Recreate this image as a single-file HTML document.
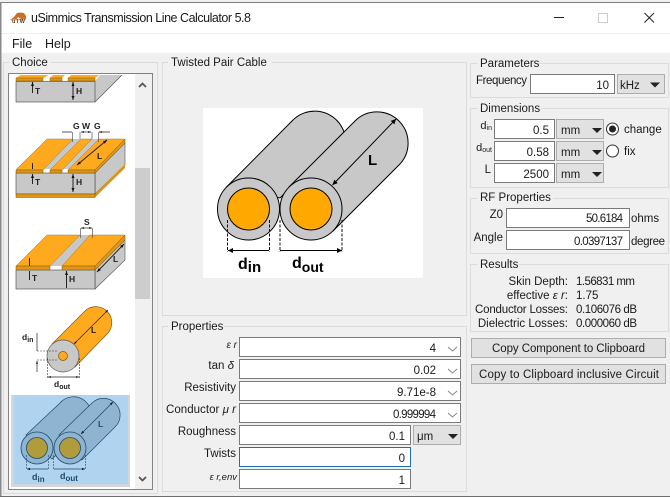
<!DOCTYPE html>
<html><head><meta charset="utf-8">
<style>
html,body{margin:0;padding:0;width:670px;height:497px;overflow:hidden;background:#f0f0f0}
svg{display:block;position:absolute;left:0;top:0}
text{font-family:"Liberation Sans","Noto Sans CJK JP",sans-serif;font-size:11.5px;fill:#1a1a1a}
.e{text-anchor:end}
.m{text-anchor:middle}
.n{font-size:11.5px;text-anchor:end}
.b{font-weight:bold;fill:#222}
.i{fill:#fff;stroke:#7a7a7a;stroke-width:1}
.c{fill:#e1e1e1;stroke:#adadad;stroke-width:1}
.g{fill:none;stroke:#dcdcdc;stroke-width:1}
.w{fill:#f0f0f0}
</style></head><body>
<svg width="670" height="497" viewBox="0 0 670 497" xmlns="http://www.w3.org/2000/svg">
<defs>
<marker id="a" markerWidth="6" markerHeight="6" refX="5" refY="3" orient="auto-start-reverse"><path d="M0 0.5L5 3L0 5.5z" fill="#000"/></marker>
<marker id="s" markerWidth="5" markerHeight="5" refX="4" refY="2.5" orient="auto-start-reverse"><path d="M0 1L4 2.5L0 4z" fill="#111"/></marker>
<clipPath id="lb"><rect x="9" y="75" width="126" height="413"/></clipPath>
</defs>

<!-- window chrome -->
<rect width="670" height="497" fill="#f0f0f0"/>
<rect x="0" y="2" width="670" height="51" fill="#fff"/>
<rect x="0" y="2" width="670" height="1" fill="#7d7d7d"/>
<rect x="1" y="33" width="669" height="1" fill="#f0f0f0"/>
<rect x="0" y="2" width="1.5" height="495" fill="#8a8a8a"/>
<rect x="0" y="496" width="670" height="1" fill="#6e6e6e"/>
<!-- title icon -->
<path d="M10 20L14 17L17 13L20 12.500L24 13L26 16L26 19L21 19L18 17L16 20z" fill="#c8702a"/>
<path d="M10 19.500L25 18.500L26 20L11 20.500z" fill="#e6a04c"/>
<text x="12" y="23" style="font-size:5.500px;font-weight:bold;fill:#5a3a1a" textLength="13">ulW</text>
<text x="31" y="22" style="font-size:12.500px" textLength="220">uSimmics Transmission Line Calculator 5.8</text>
<rect x="554" y="17" width="10" height="1" fill="#222"/>
<rect x="598.500" y="13.500" width="9" height="9" fill="none" stroke="#ccc"/>
<path d="M644.500 13L654 22.500M654 13L644.500 22.500" stroke="#222" stroke-width="1" fill="none"/>
<text x="12" y="48" style="font-size:12.500px">File</text>
<text x="45" y="48" style="font-size:12.500px">Help</text>

<!-- Choice group -->
<rect class="g" x="3.500" y="62.500" width="154" height="431"/>
<rect class="w" x="9" y="56" width="42" height="12"/>
<text x="12" y="66">Choice</text>
<rect x="8.500" y="73.500" width="144" height="416" fill="#fff" stroke="#828282"/>
<rect x="135" y="74" width="17" height="415" fill="#f0f0f0"/>
<rect x="135" y="168" width="15" height="131" fill="#cdcdcd"/>
<path d="M139 87L142.500 83.500L146 87" fill="none" stroke="#555" stroke-width="1.800"/>
<path d="M139 477L142.500 480.500L146 477" fill="none" stroke="#555" stroke-width="1.800"/>

<g clip-path="url(#lb)">
<!-- thumb 1 -->
<path d="M95 81L100 75H122L95 102z" fill="#c8c8c8"/>
<rect x="16" y="81.500" width="79" height="20.500" fill="#c8c8c8" stroke="#444" stroke-width=".6"/>
<path d="M16 78L22 74H50L44 78zM50 78L54 74H66L62 78zM68 78L72 74H101L95 78z" fill="#ffa91f"/>
<path d="M16 78H43V81H16zM50 78H62V81H50zM68 78H95V81H68z" fill="#e09515" stroke="#7a5a10" stroke-width=".5"/>
<path d="M95 102L122 75" stroke="#555" stroke-width=".7"/>
<path d="M32.500 93V82" stroke="#222" marker-end="url(#s)"/>
<path d="M73 100V82" stroke="#222" marker-end="url(#s)" marker-start="url(#s)"/>
<text class="b" x="35" y="94" style="font-size:8.500px">T</text>
<text class="b" x="76" y="94" style="font-size:8.500px">H</text>
<!-- thumb 2 -->
<path d="M95 173L125 143V165L95 194z" fill="#c8c8c8" stroke="#555" stroke-width=".6"/>
<path d="M95 194L125 164V168L95 197.500z" fill="#e09515"/>
<rect x="16" y="173" width="79" height="21" fill="#c8c8c8" stroke="#444" stroke-width=".6"/>
<rect x="16" y="194" width="79" height="3.500" fill="#e09515" stroke="#7a5a10" stroke-width=".5"/>
<path d="M16 169L47 139H125L95 169z" fill="#c8c8c8"/>
<path d="M16 170L47 139H73L43 170zM50 170L81 139H92L62 170zM68 170L99 139H125L95 170z" fill="#ffa91f" stroke="#8a6a10" stroke-width=".4"/>
<path d="M16 170H43V173H16zM50 170H62V173H50zM68 170H95V173H68z" fill="#e09515" stroke="#7a5a10" stroke-width=".5"/>
<path d="M95 170V173L125 143V139Z" fill="#e09515" stroke="#7a5a10" stroke-width=".5"/>
<path d="M32.500 163V169M32.500 184V174" stroke="#222" marker-end="url(#s)"/>
<path d="M73 192V174" stroke="#222" marker-end="url(#s)" marker-start="url(#s)"/>
<path d="M77 165L107 140" stroke="#222" marker-end="url(#s)" marker-start="url(#s)"/>
<path d="M62 132H72M110 132H99" stroke="#222" stroke-width=".7" fill="none" marker-end="url(#s)"/>
<path d="M81 132H91" stroke="#222" stroke-width=".7" marker-end="url(#s)" marker-start="url(#s)"/>
<path d="M72.500 132V142M80 132V139M92 132V139M98.500 132V142" stroke="#444" stroke-width=".6" fill="none"/>
<text class="b" x="35" y="185" style="font-size:8.500px">T</text>
<text class="b" x="76" y="185" style="font-size:8.500px">H</text>
<text class="b" x="97" y="159" style="font-size:8.500px">L</text>
<text class="b" x="73" y="129" style="font-size:8.500px">G</text>
<text class="b" x="82" y="129" style="font-size:8.500px">W</text>
<text class="b" x="94" y="129" style="font-size:8.500px">G</text>
<!-- thumb 3 -->
<path d="M95 270L125 240V260L95 289z" fill="#c8c8c8" stroke="#555" stroke-width=".6"/>
<rect x="16" y="270" width="79" height="19" fill="#c8c8c8" stroke="#444" stroke-width=".6"/>
<path d="M16 266L47 235H125L95 266z" fill="#c8c8c8"/>
<path d="M16 266L47 235H80L50 266zM62 266L90 235H125L95 266z" fill="#ffa91f" stroke="#8a6a10" stroke-width=".4"/>
<path d="M16 266H50V270H16zM62 266H95V270H62z" fill="#e09515" stroke="#7a5a10" stroke-width=".5"/>
<path d="M95 266V270L125 240V235Z" fill="#e09515" stroke="#7a5a10" stroke-width=".5"/>
<path d="M29.500 258V266M29.500 280V271M66.500 288V271" stroke="#222" marker-end="url(#s)"/>
<path d="M97 272L124 244" stroke="#222" marker-end="url(#s)" marker-start="url(#s)"/>
<path d="M81 228H92" stroke="#222" stroke-width=".7" marker-end="url(#s)" marker-start="url(#s)"/>
<path d="M80.500 228V238M92.500 228V238" stroke="#444" stroke-width=".6" fill="none"/>
<text class="b" x="84" y="225" style="font-size:8.500px">S</text>
<text class="b" x="32" y="281" style="font-size:8.500px">T</text>
<text class="b" x="69" y="282" style="font-size:8.500px">H</text>
<text class="b" x="113" y="262" style="font-size:8.500px">L</text>
<!-- thumb 4 coax -->
<path d="M52 344L86 310A16 16 0 0 1 108 333L75 367z" fill="#ffa91f" stroke="#7a5a10" stroke-width=".7"/>
<circle cx="63" cy="356" r="16" fill="#c8c8c8" stroke="#555" stroke-width=".7"/>
<circle cx="63" cy="356" r="4.500" fill="#ffa91f" stroke="#7a5a10" stroke-width=".7"/>
<path d="M74 344L108 310" stroke="#222" stroke-width=".7" marker-end="url(#s)" marker-start="url(#s)"/>
<path d="M37 351H58M37 360H58" stroke="#333" stroke-width=".6" stroke-dasharray="2 1"/>
<path d="M37 333V351M37 372V361" stroke="#222" stroke-width=".7" marker-end="url(#s)"/>
<path d="M47.500 358V378M79.500 358V378" stroke="#333" stroke-width=".6" stroke-dasharray="2 1"/>
<path d="M48 377H79" stroke="#222" stroke-width=".7" marker-end="url(#s)" marker-start="url(#s)"/>
<text class="b" x="91" y="333" style="font-size:8.500px">L</text>
<text class="b" x="22" y="340" style="font-size:8.500px">d<tspan dy="2" style="font-size:7px">in</tspan></text>
<text class="b" x="54" y="387" style="font-size:8.500px">d<tspan dy="2" style="font-size:7px">out</tspan></text>
<!-- thumb 5 selected -->
<rect x="11" y="395" width="119" height="92" fill="#d0d6db"/>
<rect x="14" y="395" width="114" height="89" fill="#b0d4f0"/>
<path d="M26 435L60 403A16 16 0 0 1 87 426L52 459z" fill="#8fb4d1" stroke="#1f4a6a" stroke-width=".7"/>
<path d="M59 435L92 403A16 16 0 0 1 115 427L82 460z" fill="#8fb4d1" stroke="#1f4a6a" stroke-width=".7"/>
<circle cx="37" cy="448" r="16" fill="#8fb4d1" stroke="#1f4a6a" stroke-width=".8"/>
<circle cx="37" cy="448" r="10.500" fill="#b19c3c" stroke="#1f4a6a" stroke-width=".8"/>
<circle cx="70" cy="448" r="16" fill="#8fb4d1" stroke="#1f4a6a" stroke-width=".8"/>
<circle cx="70" cy="448" r="10.500" fill="#b19c3c" stroke="#1f4a6a" stroke-width=".8"/>
<path d="M81 434L113 402" stroke="#1f4a6a" stroke-width=".8" marker-end="url(#s)" marker-start="url(#s)"/>
<path d="M26.500 455V470M48.500 455V470M53.500 455V470M85.500 455V470" stroke="#1f4a6a" stroke-width=".6" stroke-dasharray="2 1"/>
<path d="M27 469H48M54 469H85" stroke="#1f4a6a" stroke-width=".8" marker-end="url(#s)" marker-start="url(#s)"/>
<text x="98" y="427" style="font-size:8.500px;font-weight:bold;fill:#1f4a6a">L</text>
<text x="32" y="480" style="font-size:9px;font-weight:bold;fill:#1f4a6a">d<tspan dy="2" style="font-size:8px">in</tspan></text>
<text x="60" y="479" style="font-size:9px;font-weight:bold;fill:#1f4a6a">d<tspan dy="2" style="font-size:8px">out</tspan></text>
</g>
<rect x="152" y="73.500" width="1" height="416" fill="#828282"/>

<!-- Twisted Pair group -->
<rect class="g" x="162.500" y="62.500" width="304" height="253"/>
<rect class="w" x="168" y="56" width="104" height="12"/>
<text x="171" y="66">Twisted Pair Cable</text>
<rect x="203" y="108" width="220" height="170" fill="#fff"/>
<g stroke="#000" stroke-width="1">
<path d="M226.500 187L292 121A31 31 0 0 1 344 132L280 198z" fill="#c8c8c8"/>
<path d="M289 187L355 121A31 31 0 0 1 399 165L333 231z" fill="#c8c8c8"/>
<circle cx="248.500" cy="209" r="31" fill="#c8c8c8"/>
<circle cx="248.500" cy="209" r="21" fill="#ffa900"/>
<circle cx="311" cy="209" r="31" fill="#c8c8c8"/>
<circle cx="311" cy="209" r="21" fill="#ffa900"/>
<path d="M332.500 185L396 119" marker-end="url(#a)" marker-start="url(#a)" fill="none"/>
<path d="M227.500 220V252M269.500 220V252M280 220V252M342 220V252" stroke-dasharray="3 1.500" stroke="#111"/>
<path d="M228 250.500H269M280 250.500H342" marker-end="url(#a)" marker-start="url(#a)" fill="none"/>
</g>
<text x="368" y="165" style="font-size:15px;font-weight:bold;fill:#000">L</text>
<text x="238" y="269" style="font-size:16px;font-weight:bold;fill:#000">d<tspan dy="3" style="font-size:15px">in</tspan></text>
<text x="292" y="268" style="font-size:16px;font-weight:bold;fill:#000">d<tspan dy="4" style="font-size:14px">out</tspan></text>

<!-- Properties group -->
<rect class="g" x="162.500" y="326.500" width="304" height="165"/>
<rect class="w" x="168" y="320" width="56" height="12"/>
<text x="171" y="330">Properties</text>
<rect class="i" x="239.500" y="337.500" width="221" height="19"/>
<rect class="i" x="239.500" y="359.500" width="221" height="19"/>
<rect class="i" x="239.500" y="381.500" width="221" height="19"/>
<rect class="i" x="239.500" y="403.500" width="221" height="19"/>
<rect class="i" x="239.500" y="425.500" width="171" height="19"/>
<rect class="c" x="413.500" y="425.500" width="47" height="19"/>
<rect x="239.500" y="447.500" width="171" height="19" fill="#fff" stroke="#1f6fb5"/>
<rect class="i" x="239.500" y="469.500" width="171" height="19"/>
<g fill="none" stroke="#888"><path d="M448 347L452.500 351L457 347"/><path d="M448 369L452.500 373L457 369"/><path d="M448 391L452.500 395L457 391"/><path d="M448 413L452.500 417L457 413"/></g>
<path d="M448 434H458L453 439z" fill="#222"/>
<text class="n" x="436" y="352">4</text>
<text class="n" x="436" y="374">0.02</text>
<text class="n" x="436" y="396" textLength="39">9.71e-8</text>
<text class="n" x="436" y="418" textLength="43">0.999994</text>
<text class="n" x="405" y="440">0.1</text>
<text x="417" y="440">μm</text>
<text class="n" x="405" y="462">0</text>
<text class="n" x="405" y="484">1</text>
<text class="e" x="237" y="348" style="font-style:italic;font-size:10px">ε r</text>
<text class="e" x="234" y="369">tan  <tspan style="font-style:italic">δ</tspan></text>
<text class="e" x="236" y="391">Resistivity</text>
<text x="166" y="413" textLength="70">Conductor  <tspan style="font-style:italic">μ r</tspan></text>
<text class="e" x="236" y="435">Roughness</text>
<text class="e" x="236" y="457">Twists</text>
<text class="e" x="237" y="480" style="font-style:italic;font-size:9.500px">ε r,env</text>

<!-- Parameters -->
<rect class="g" x="470.500" y="63.500" width="198" height="34"/>
<rect class="w" x="477" y="57" width="60" height="12"/>
<text x="480" y="67">Parameters</text>
<text x="476" y="84" textLength="51">Frequency</text>
<rect class="i" x="530.500" y="74.500" width="84" height="19"/>
<rect class="c" x="617.500" y="74.500" width="47" height="19"/>
<text class="n" x="609" y="89">10</text>
<text x="620" y="89">kHz</text>
<path d="M650 82.500H660L655 87.500z" fill="#222"/>

<!-- Dimensions -->
<rect class="g" x="470.500" y="108.500" width="198" height="79"/>
<rect class="w" x="477" y="102" width="64" height="12"/>
<text x="480" y="112">Dimensions</text>
<rect class="i" x="494.500" y="119.500" width="60" height="19"/>
<rect class="i" x="494.500" y="141.500" width="60" height="19"/>
<rect class="i" x="494.500" y="163.500" width="60" height="19"/>
<rect class="c" x="556.500" y="119.500" width="47" height="19"/>
<rect class="c" x="556.500" y="141.500" width="47" height="19"/>
<rect class="c" x="556.500" y="163.500" width="47" height="19"/>
<text class="n" x="549" y="134">0.5</text>
<text class="n" x="549" y="156">0.58</text>
<text class="n" x="549" y="178">2500</text>
<text x="561" y="134">mm</text><text x="561" y="156">mm</text><text x="561" y="178">mm</text>
<path d="M592 128H602L597 133zM592 150H602L597 155zM592 172H602L597 177z" fill="#222"/>
<text class="e" x="492" y="129" style="font-size:11px">d<tspan dy="1" style="font-size:7px">in</tspan></text>
<text class="e" x="492" y="151" style="font-size:11px">d<tspan dy="1" style="font-size:7px">out</tspan></text>
<text class="e" x="491" y="173">L</text>
<circle cx="612.500" cy="129" r="6" fill="#fff" stroke="#333"/>
<circle cx="612.500" cy="129" r="3.500" fill="#222"/>
<circle cx="612.500" cy="151" r="6" fill="#fff" stroke="#333"/>
<text x="624" y="133">change</text>
<text x="624" y="155">fix</text>

<!-- RF Properties -->
<rect class="g" x="470.500" y="198.500" width="198" height="55"/>
<rect class="w" x="477" y="192" width="76" height="12"/>
<text x="480" y="201">RF Properties</text>
<rect class="i" x="506.500" y="208.500" width="123" height="19"/>
<rect class="i" x="506.500" y="230.500" width="123" height="19"/>
<text class="n" x="623" y="222" textLength="37">50.6184</text>
<text class="n" x="623" y="245" textLength="49">0.0397137</text>
<text class="e" x="503" y="218">Z0</text>
<text class="e" x="503" y="241">Angle</text>
<text x="631" y="222">ohms</text>
<text x="631" y="245" textLength="34">degree</text>

<!-- Results -->
<rect class="g" x="470.500" y="264.500" width="198" height="67"/>
<rect class="w" x="477" y="258" width="42" height="12"/>
<text x="480" y="268">Results</text>
<text class="e" x="568" y="285">Skin Depth:</text>
<text class="e" x="568" y="299">effective  <tspan style="font-style:italic">ε r</tspan>:</text>
<text x="475" y="313" textLength="93">Conductor Losses:</text>
<text class="e" x="568" y="327">Dielectric Losses:</text>
<text x="576" y="285" textLength="59">1.56831 mm</text>
<text x="576" y="299">1.75</text>
<text x="576" y="313" textLength="61">0.106076 dB</text>
<text x="576" y="327" textLength="61">0.000060 dB</text>

<!-- Buttons -->
<rect x="471.500" y="338.500" width="194" height="19" fill="#e1e1e1" stroke="#adadad"/>
<rect x="471.500" y="364.500" width="194" height="19" fill="#e1e1e1" stroke="#adadad"/>
<text x="492" y="352" textLength="153">Copy Component to Clipboard</text>
<text x="479" y="378" textLength="180">Copy to Clipboard inclusive Circuit</text>
</svg>
</body></html>
